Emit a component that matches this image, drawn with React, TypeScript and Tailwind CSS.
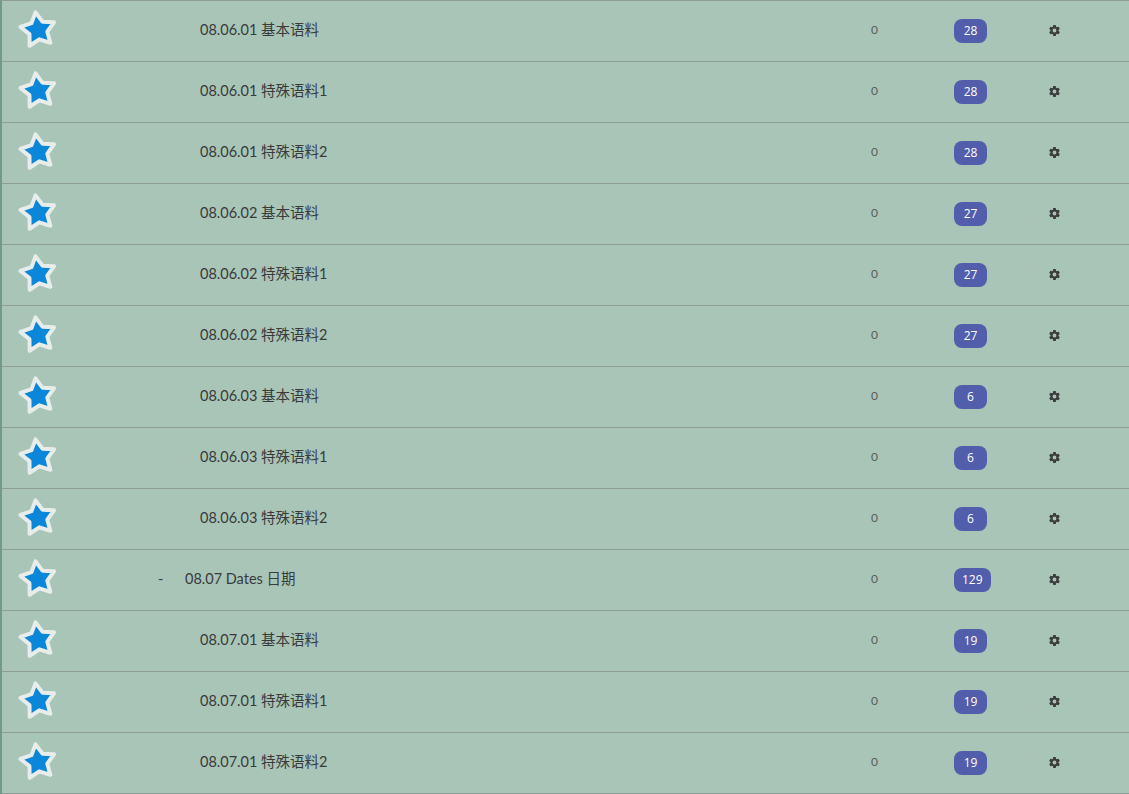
import React from "react";

type Row = { name: string; count: number; parent?: boolean };

const rows: Row[] = [
  { name: "08.06.01 基本语料", count: 28 },
  { name: "08.06.01 特殊语料1", count: 28 },
  { name: "08.06.01 特殊语料2", count: 28 },
  { name: "08.06.02 基本语料", count: 27 },
  { name: "08.06.02 特殊语料1", count: 27 },
  { name: "08.06.02 特殊语料2", count: 27 },
  { name: "08.06.03 基本语料", count: 6 },
  { name: "08.06.03 特殊语料1", count: 6 },
  { name: "08.06.03 特殊语料2", count: 6 },
  { name: "08.07 Dates 日期", count: 129, parent: true },
  { name: "08.07.01 基本语料", count: 19 },
  { name: "08.07.01 特殊语料1", count: 19 },
  { name: "08.07.01 特殊语料2", count: 19 },
];

const Star = () => (
  <svg width="44" height="44" viewBox="0 0 42 42" className="-rotate-[8deg]">
    <polygon
      points="21,4 26.3,13.7 37.2,15.8 29.6,23.8 31,34.8 21,30 11,34.8 12.4,23.8 4.8,15.8 15.7,13.7"
      fill="#0a87d8"
      stroke="#e8ecea"
      strokeWidth="3.8"
      strokeLinejoin="round"
    />
  </svg>
);

const Gear = () => (
  <svg width="13" height="13" viewBox="0 0 24 24" fill="#3d3d3d">
    <path d="M19.4 13c.04-.33.06-.66.06-1s-.02-.67-.06-1l2.1-1.65c.2-.15.24-.42.12-.64l-2-3.46c-.12-.22-.39-.3-.61-.22l-2.49 1c-.52-.4-1.08-.73-1.69-.98l-.38-2.65A.49.49 0 0 0 14 2h-4c-.25 0-.46.18-.49.42l-.38 2.65c-.61.25-1.170.59-1.69.98l-2.49-1a.5.5 0 0 0-.61.22l-2 3.46c-.13.22-.07.49.12.64L4.57 11c-.04.33-.07.66-.07 1s.03.67.07 1l-2.11 1.65c-.19.15-.24.42-.12.64l2 3.46c.12.22.39.3.61.22l2.49-1c.52.4 1.08.73 1.69.98l.38 2.65c.03.24.24.42.49.42h4c.25 0 .46-.18.49-.42l.38-2.65c.61-.25 1.17-.59 1.69-.98l2.49 1c.23.09.49 0 .61-.22l2-3.46c.12-.22.07-.49-.12-.64L19.4 13zM12 15.5A3.5 3.5 0 1 1 12 8.5a3.5 3.5 0 0 1 0 7z" />
  </svg>
);

export default function App() {
  return (
    <div
      className="w-[1129px] h-[794px] overflow-hidden bg-[#a8c5b8] border-l-2 border-l-[#6f9c86] border-t border-t-[#8c9e95]"
      style={{ fontFamily: '"Lato", "Noto Sans CJK SC", sans-serif' }}
    >
      {rows.map((r, i) => (
        <div key={i} className="flex items-center h-[61px] pb-[2px] border-b border-[#8c9e95]">
          <div className="w-[74px] pl-[14px] flex items-center">
            <Star />
          </div>
          <div className="w-[740px] flex items-center text-[14.5px] text-[#3a3a3a]">
            {r.parent ? (
              <>
                <span className="ml-[82px] w-[27px]">-</span>
                <span>{r.name}</span>
              </>
            ) : (
              <span className="ml-[124px]">{r.name}</span>
            )}
          </div>
          <div className="w-[138px] text-[12px] text-[#5a5a5a] pl-[55px]">0</div>
          <div className="w-[94px]">
            <span className="inline-flex items-center justify-center h-[24px] min-w-[33px] px-[8px] rounded-[8px] bg-[#525eab] text-white text-[12px] font-medium" style={{ fontFamily: '"Open Sans", sans-serif' }}>
              {r.count}
            </span>
          </div>
          <div className="flex items-center">
            <Gear />
          </div>
        </div>
      ))}
    </div>
  );
}
